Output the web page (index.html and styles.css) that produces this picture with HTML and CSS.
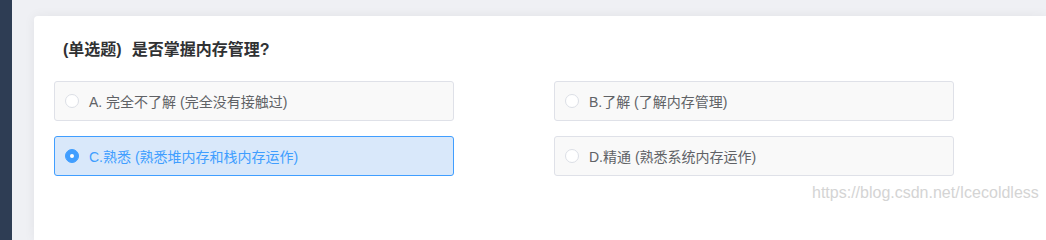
FILE: index.html
```html
<!DOCTYPE html>
<html lang="zh-CN">
<head>
<meta charset="utf-8">
<title>单选题</title>
<link rel="stylesheet" href="styles.css">
</head>
<body>
<div class="layout">
  <aside class="sidebar"></aside>
  <main class="main">
    <section class="card">
      <h2 class="title"><span class="qtype">(单选题)</span>是否掌握内存管理?</h2>
      <div class="options">
        <label class="option"><span class="radio"></span><span class="label">A. 完全不了解 (完全没有接触过)</span></label>
        <label class="option"><span class="radio"></span><span class="label">B.了解 (了解内存管理)</span></label>
        <label class="option is-checked"><span class="radio"></span><span class="label">C.熟悉 (熟悉堆内存和栈内存运作)</span></label>
        <label class="option"><span class="radio"></span><span class="label">D.精通 (熟悉系统内存运作)</span></label>
      </div>
    </section>
  </main>
</div>
<div class="watermark">https://blog.csdn.net/Icecoldless</div>
</body>
</html>
```
FILE: styles.css
```css
html, body {
  margin: 0;
  padding: 0;
  min-height: 100vh;
  overflow: hidden;
}
body {
  font-family: "Liberation Sans", "Noto Sans CJK SC", sans-serif;
  background: #eff0f4;
  position: relative;
}
.layout {
  display: flex;
  min-height: 100vh;
}
.sidebar {
  width: 12px;
  flex: 0 0 12px;
  background: #2e3d54;
}
.main {
  flex: 1;
  display: flex;
  flex-direction: column;
  padding: 16px 0 0 22px;
}
.card {
  flex: 1;
  background: #fff;
  border-radius: 4px 0 0 0;
  box-shadow: 0 0 12px rgba(0, 0, 0, 0.06);
  padding: 22px 20px 0 20px;
}
.title {
  margin: 0 0 19px 0;
  padding-left: 9px;
  font-size: 16px;
  line-height: 24px;
  font-weight: bold;
  color: #303133;
}
.qtype {
  margin-right: 10px;
}
.options {
  display: grid;
  grid-template-columns: 400px 400px;
  column-gap: 100px;
  row-gap: 15px;
}
.option {
  display: flex;
  align-items: center;
  height: 40px;
  box-sizing: border-box;
  border: 1px solid #dfe1e8;
  border-radius: 3px;
  background: #f9f9f9;
  padding-left: 10px;
  color: #606266;
  font-size: 14px;
}
.radio {
  width: 14px;
  height: 14px;
  box-sizing: border-box;
  border: 1px solid #dcdfe6;
  border-radius: 50%;
  background: #fff;
  margin-right: 10px;
  display: flex;
  align-items: center;
  justify-content: center;
}
.option.is-checked {
  background: #d9e8fa;
  border-color: #409eff;
  color: #409eff;
}
.option.is-checked .radio {
  background: #409eff;
  border-color: #409eff;
}
.option.is-checked .radio::after {
  content: "";
  width: 4px;
  height: 4px;
  border-radius: 50%;
  background: #fff;
}
.watermark {
  position: absolute;
  left: 812px;
  top: 183px;
  font-size: 16px;
  line-height: 20px;
  color: #d4d4d4;
  font-family: "Liberation Sans", sans-serif;
}
```
